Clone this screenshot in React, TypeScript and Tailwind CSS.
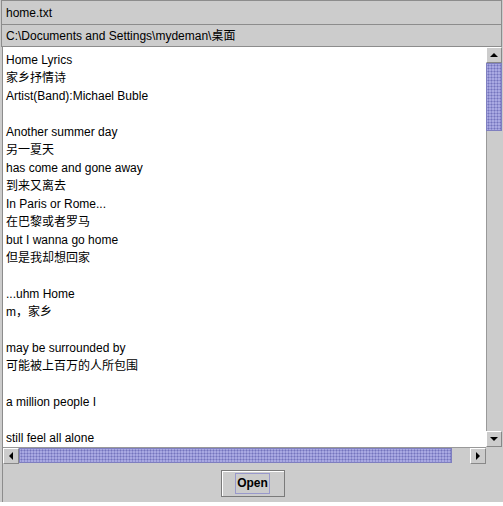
const lines = [
  'Home Lyrics',
  '家乡抒情诗',
  'Artist(Band):Michael Buble',
  '',
  'Another summer day',
  '另一夏天',
  'has come and gone away',
  '到来又离去',
  'In Paris or Rome...',
  '在巴黎或者罗马',
  'but I wanna go home',
  '但是我却想回家',
  '',
  '...uhm Home',
  'm，家乡',
  '',
  'may be surrounded by',
  '可能被上百万的人所包围',
  '',
  'a million people I',
  '',
  'still feel all alone',
]

const font = "font-['Liberation_Sans','Noto_Sans_CJK_SC',sans-serif]"

function Arrow({ dir }: { dir: 'up' | 'down' | 'left' | 'right' }) {
  const pts = {
    up: '0,4 4,0 8,4',
    down: '0,0 8,0 4,4',
    left: '4,0 4,8 0,4',
    right: '0,0 0,8 4,4',
  }[dir]
  const vert = dir === 'up' || dir === 'down'
  return (
    <svg width={vert ? 8 : 4} height={vert ? 4 : 8} viewBox={vert ? '0 0 8 4' : '0 0 4 8'}>
      <polygon points={pts} fill="#000" />
    </svg>
  )
}

function ArrowButton({ dir }: { dir: 'up' | 'down' | 'left' | 'right' }) {
  return (
    <div className="flex h-[16px] w-[16px] shrink-0 items-center justify-center border border-t-white border-l-white border-r-[#888] border-b-[#888] bg-[#cccccc]">
      <Arrow dir={dir} />
    </div>
  )
}

const thumb =
  'bg-[#a9a9e2] bg-[radial-gradient(circle,#7474bd_0.9px,transparent_1.1px)] bg-[length:3px_3px] border border-[#7f7fbf]'

export default function App() {
  return (
    <div className={`h-[506px] w-[503px] bg-white ${font}`}>
      <div className="flex h-[502px] flex-col bg-[#cccccc] pl-[1px] pr-[1px]">
        <div className="flex h-[25px] items-center border border-[#8c8c8c] pl-[4px] text-[12px] text-black">
          home.txt
        </div>
        <div className="flex h-[22px] items-center border border-t-0 border-[#8c8c8c] pl-[4px] text-[12px] text-black">
          C:\Documents and Settings\mydeman\桌面
        </div>
        <div className="ml-[1px] flex flex-1 flex-col border-l border-[#8c8c8c]">
          <div className="flex h-[400px]">
            <div className="flex-1 overflow-hidden bg-white pl-[3px] pt-[4px] text-[12px] leading-[18px] text-black">
              {lines.map((l, i) => (
                <div key={i} className="h-[18px] whitespace-pre">
                  {l || ' '}
                </div>
              ))}
            </div>
            <div className="flex w-[16px] flex-col bg-[#cccccc]">
              <ArrowButton dir="up" />
              <div className={`h-[68px] ${thumb}`} />
              <div className="flex-1 border-l border-[#999]" />
              <ArrowButton dir="down" />
            </div>
          </div>
          <div className="flex h-[16px]">
            <div className="flex flex-1 border-t border-[#999]">
              <ArrowButton dir="left" />
              <div className={`w-[433px] ${thumb}`} />
              <div className="flex-1" />
              <ArrowButton dir="right" />
            </div>
            <div className="w-[16px] bg-[#cccccc]" />
          </div>
          <div className="flex flex-1 items-center justify-center pt-[1px]">
            <button className="flex h-[27px] w-[64px] items-center justify-center border border-[#7a7a7a] bg-[#cccccc] shadow-[inset_1px_1px_0_#fff]">
              <span className="border border-[#9999cc] px-[1px] py-[1px] text-[12px] font-bold leading-[17px] text-black">
                Open
              </span>
            </button>
          </div>
        </div>
      </div>
    </div>
  )
}
